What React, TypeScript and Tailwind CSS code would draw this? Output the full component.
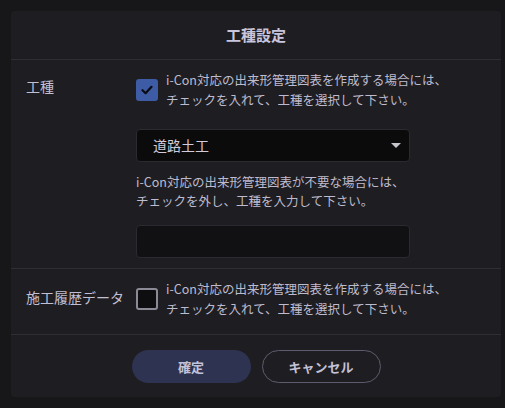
import { useState } from 'react';

const font = { fontFamily: '"Noto Sans CJK JP", "Noto Sans", sans-serif' };

function Check({ checked, onChange }: { checked: boolean; onChange: () => void }) {
    return (
        <button
            type="button"
            onClick={onChange}
            className={
                checked
                    ? 'w-[22px] h-[22px] shrink-0 rounded-[3px] bg-[#3e5ba6] flex items-center justify-center'
                    : 'w-[22px] h-[22px] shrink-0 rounded-[3px] bg-[#0e0e10] border-2 border-[#8b8a96]'
            }
        >
            {checked && (
                <svg width="12" height="10" viewBox="0 0 12 10">
                    <path d="M1.5 5.2 L4.6 8.2 L10.5 1.8" fill="none" stroke="#0b0b12" strokeWidth="2.2" strokeLinecap="round" strokeLinejoin="round" />
                </svg>
            )}
        </button>
    );
}

export default function App() {
    const [useICon, setUseICon] = useState(true);
    const [useHistory, setUseHistory] = useState(false);
    const [koshu, setKoshu] = useState('');

    return (
        <div className="w-[505px] h-[408px] bg-[#17171a] p-[11px] pr-[4px]" style={font}>
            <div className="bg-[#1e1e22] rounded-[4px] h-[386px] flex flex-col">
                <div className="h-[49px] flex items-center justify-center border-b border-[#2e2e34]">
                    <h2 className="text-[15px] font-bold text-[#c9c5dd]">工種設定</h2>
                </div>

                {/* 工種 */}
                <div className="flex pl-[15px] pt-[10px] pb-[10px] border-b border-[#2e2e34]">
                    <div className="w-[110px] pt-[6px] text-[14px] leading-5 text-[#c3bfd3]">工種</div>
                    <div className="flex flex-col">
                        <div className="flex items-center gap-[8px]">
                            <Check checked={useICon} onChange={() => setUseICon(!useICon)} />
                            <p className="text-[12.5px] leading-5 text-[#bfbbcf]">
                                i-Con対応の出来形管理図表を作成する場合には、
                                <br />
                                チェックを入れて、工種を選択して下さい。
                            </p>
                        </div>
                        <div className="mt-[19px] w-[274px] h-[33px] bg-[#0b0b0c] border border-[#2a2a30] rounded-[4px] flex items-center justify-between pl-[16px] pr-[8px]">
                            <span className="text-[14px] text-[#d0ccdc]">道路土工</span>
                            <svg width="10" height="5" viewBox="0 0 10 5">
                                <path d="M0 0 H10 L5 5 Z" fill="#c6c6cc" />
                            </svg>
                        </div>
                        <p className="mt-[10px] text-[12.5px] leading-[19px] text-[#bfbbcf]">
                            i-Con対応の出来形管理図表が不要な場合には、
                            <br />
                            チェックを外し、工種を入力して下さい。
                        </p>
                        <input
                            value={koshu}
                            onChange={(e) => setKoshu(e.target.value)}
                            className="mt-[15px] w-[274px] h-[33px] bg-[#111113] border border-[#2a2a30] rounded-[4px] px-3 text-[14px] text-[#d0ccdc] focus:outline-none"
                        />
                    </div>
                </div>

                {/* 施工履歴データ */}
                <div className="flex items-start pl-[15px] pt-[10px] pb-[15px] border-b border-[#2e2e34]">
                    <div className="w-[110px] pt-[8px] text-[14px] leading-5 text-[#c3bfd3] whitespace-nowrap">施工履歴データ</div>
                    <div className="flex items-center gap-[8px]">
                        <Check checked={useHistory} onChange={() => setUseHistory(!useHistory)} />
                        <p className="text-[12.5px] leading-5 text-[#bfbbcf]">
                            i-Con対応の出来形管理図表を作成する場合には、
                            <br />
                            チェックを入れて、工種を選択して下さい。
                        </p>
                    </div>
                </div>

                <div className="flex justify-center gap-[11px] pt-[15px]">
                    <button className="w-[119px] h-[33px] rounded-full bg-[#2d3350] text-[13px] font-bold text-[#c3c1d8]">
                        確定
                    </button>
                    <button className="w-[119px] h-[33px] rounded-full border border-[#5d5b6e] text-[13px] font-bold text-[#c3c1d8]">
                        キャンセル
                    </button>
                </div>
            </div>
        </div>
    );
}
